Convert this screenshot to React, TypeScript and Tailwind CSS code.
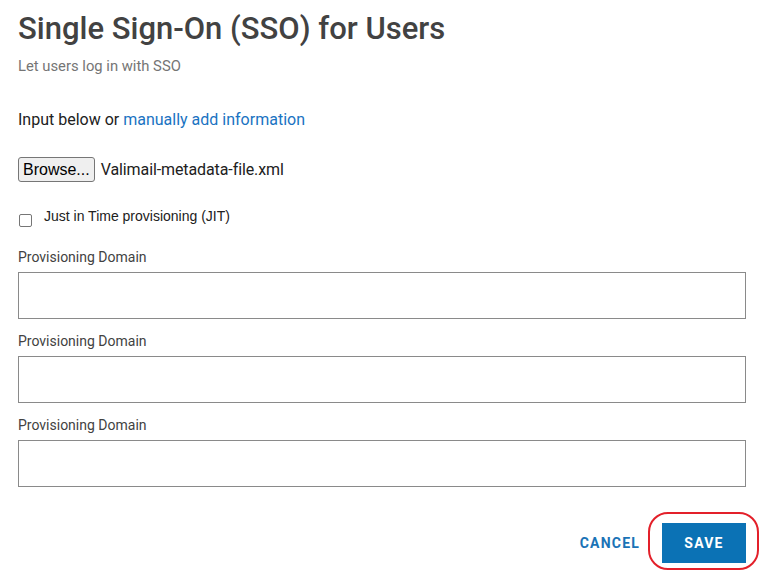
import React from "react";

// SSO settings form: header, metadata upload, JIT toggle, domains, actions.

const DOMAINS = ["Provisioning Domain", "Provisioning Domain", "Provisioning Domain"];

export default function App() {
  return (
    <div className="w-[772px] h-[581px] bg-white font-['Roboto',sans-serif] overflow-hidden">
      <div className="pl-[18px] pr-[26px] pt-[10px]">
        {/* Header */}
        <h1 className="text-[31px] leading-[38px] font-medium text-[#424242]">
          Single Sign-On (SSO) for Users
        </h1>
        <p className="mt-[9px] text-[14.8px] leading-[18px] text-[#757575]">Let users log in with SSO</p>

        {/* Source */}
        <p className="mt-[35px] text-[16px] leading-[20px] text-[#212121]">
          Input below or{" "}
          <a href="#" className="text-[#1a73c2]">
            manually add information
          </a>
        </p>

        <div className="mt-[27px] flex items-center gap-[6px]">
          <button className="h-[25px] px-[4px] rounded-[3px] border border-[#767676] bg-[#efefef] font-['Liberation_Sans',sans-serif] text-[16px] leading-[20px] text-black">
            Browse...
          </button>
          <span className="text-[16px] leading-[20px] tracking-[-0.1px] text-[#212121]">Valimail-metadata-file.xml</span>
        </div>

        {/* JIT */}
        <label className="mt-[26px] flex items-start gap-[12px]">
          <span className="mt-[6px] w-[13px] h-[13px] ml-[1px] rounded-[2px] border-[1.5px] border-[#767676] bg-white" />
          <span className="font-['Liberation_Sans',sans-serif] text-[14px] leading-[16px] text-[#212121]">
            Just in Time provisioning (JIT)
          </span>
        </label>

        {/* Domains */}
        <div className="mt-[22px] flex flex-col gap-[14px]">
          {DOMAINS.map((label, i) => (
            <div key={i}>
              <div className="text-[14px] leading-[16px] text-[#424242]">{label}</div>
              <input
                type="text"
                className="mt-[7px] block w-[728px] h-[47px] border border-[#8a8a8a] bg-white outline-none"
              />
            </div>
          ))}
        </div>

        {/* Actions */}
        <div className="mt-[36px] flex items-center justify-end">
          <button className="mr-[22px] text-[14px] font-bold tracking-[1.2px] text-[#1a73b6]">CANCEL</button>
          <div className="relative">
            <button className="w-[84px] h-[40px] bg-[#0b72b5] text-white text-[14px] font-bold tracking-[1.2px]">
              SAVE
            </button>
            <span className="pointer-events-none absolute -left-[14px] -top-[11px] w-[111px] h-[58px] rounded-[20px] border-[2.5px] border-[#e3202a]" />
          </div>
        </div>
      </div>
    </div>
  );
}
